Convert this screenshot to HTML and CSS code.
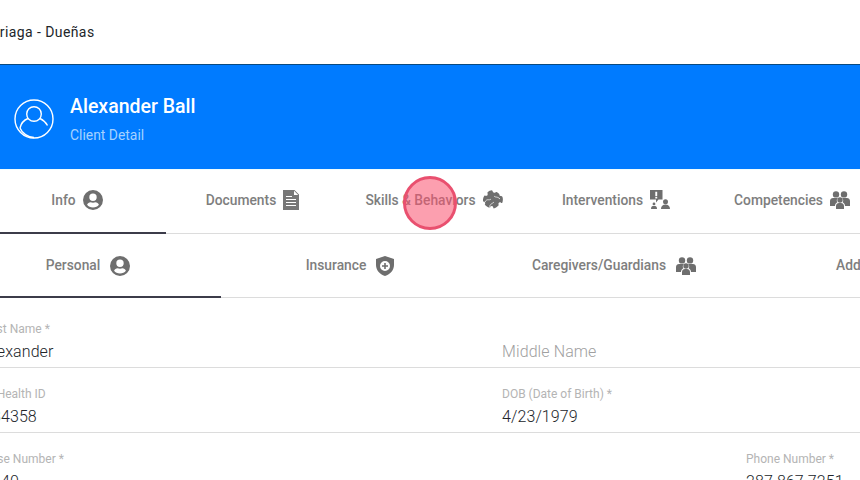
FILE: index.html
```html
<!DOCTYPE html>
<html lang="en">
<head>
<meta charset="utf-8">
<title>Client Detail</title>
<link rel="stylesheet" href="styles.css">
</head>
<body>
<svg class="defs" width="0" height="0" aria-hidden="true">
  <symbol id="i-user" viewBox="0 0 20 20"><path fill-rule="evenodd" d="M10 0a10 10 0 1 0 0 20a10 10 0 0 0 0-20zM10 3.600a3.700 3.700 0 1 1 0 7.400a3.700 3.700 0 0 1 0-7.400zM10 17.600c-2.500 0-4.600-1.100-5.900-2.800c.5-1.700 2-2.600 3.400-2.600c.8.3 1.600.5 2.500.5s1.700-.2 2.500-.5c1.400 0 2.900.9 3.400 2.600c-1.300 1.700-3.400 2.800-5.900 2.800z"/></symbol>
  <symbol id="i-doc" viewBox="0 0 16 20"><path fill-rule="evenodd" d="M0 0h11.500l4.500 4.500V20H0zM11 .8V5h4.200zM3 6v1.100h6V6zM3 9v1.100h10V9zM3 12v1.100h10V12zM3 15v1.100h10V15z"/></symbol>
  <symbol id="i-skill" viewBox="0 0 20 20"><path d="M9 .3c1 .9.600 2.200 2 2.500c1.200.2 1.500-1.100 2.700-.8c1.100.5 2 1.300 2.800 2.200c-.5 1 .2 1.500 1 1.800c1.100.2 1.500 0 2 1c.6 2 .5 4-.3 6c-1.100.4-1.700-1-2.800-.6c-1.300.5-.9 1.900-.7 2.800c-1.300 1.500-3 2.700-5 3.300c-.8-.7-.3-2-1.600-2.400c-1.400-.3-1.700 1-2.800 1.600C4 16.700 2.800 15.800 1.800 14.500c.5-1 .7-2-.3-2.600c-.6-.3-1-.2-1.500-.3c-.3-2.300.2-4.300 1.500-6c1.100 0 2 .7 2.800-.2c.8-1 .1-2 .1-2.800C5.800 1 7.400.4 9 .3z"/><path fill="none" stroke="#ddd" stroke-width="1" d="M2 12c2-4 4-1 6-3M11 6c2 2 3 0 6 3M7 18c-1-4 2-4 4-6"/></symbol>
  <symbol id="i-interv" viewBox="0 0 20 20"><path fill-rule="evenodd" d="M0 0h12.500v9.500H8.500L6 12.500V9.500H0zM5.300 1.800v4.400h1.900V1.800zM5.300 6.900v1.500h1.900V6.900z"/><circle cx="15.500" cy="11.800" r="2.500"/><path d="M11 19c0-2.800 1.800-4.400 4.500-4.400S20 16.200 20 19zM1 19c0-2 1-3.200 3-3.200S7 17 7 19zM2.600 14a1.400 1.400 0 1 1 2.800 0l-.3 1h-2.200z"/></symbol>
  <symbol id="i-group" viewBox="0 0 20 18"><circle cx="6" cy="3.400" r="3.200"/><circle cx="14" cy="3.400" r="3.200"/><circle cx="10" cy="9" r="2.700"/><path d="M0 15V10c0-2 1.500-3 3-3h5c-1.500 1-1.500 3-.7 4.300C6 12 5 13.500 5 15zM20 15V10c0-2-1.500-3-3-3h-5c1.500 1 1.500 3 .7 4.300C14 12 15 13.500 15 15zM6 18v-3c0-2 1.500-3 3-3h2c1.500 0 3 1 3 3v3z"/></symbol>
  <symbol id="i-shield" viewBox="0 0 18 20"><path fill-rule="evenodd" d="M9 0l9 3v6c0 5-3.500 9-9 11C3.500 18 0 14 0 9V3zM9 5a5 5 0 1 0 0 10a5 5 0 0 0 0-10zM8.200 7h1.600v2.200H12v1.600H9.800V13H8.200v-2.200H6V9.200h2.200z"/></symbol>
</svg>

<div class="page">
  <header class="topbar"><span class="org">Arriaga - Dueñas</span></header>

  <section class="banner">
    <svg class="avatar" viewBox="0 0 40 40" aria-hidden="true">
      <circle cx="20" cy="20" r="19"/>
      <circle cx="20" cy="15" r="7.300"/>
      <path d="M14 19.500c-4 1.500-7 5-8 9.500M26 19.500c3 1.300 5.500 3.500 7.500 7"/>
      <path d="M6 29c2 5 8 9.500 14 9.500"/>
    </svg>
    <div class="banner-text">
      <h1 class="client-name">Alexander Ball</h1>
      <p class="client-sub">Client Detail</p>
    </div>
  </section>

  <nav class="tabs tabs-main">
    <a class="tab active">Info <svg class="ico ico-user"><use href="#i-user"/></svg></a>
    <a class="tab">Documents <svg class="ico ico-doc"><use href="#i-doc"/></svg></a>
    <a class="tab">Skills &amp; Behaviors <svg class="ico ico-user"><use href="#i-skill"/></svg></a>
    <a class="tab">Interventions <svg class="ico ico-user"><use href="#i-interv"/></svg></a>
    <a class="tab">Competencies <svg class="ico ico-group"><use href="#i-group"/></svg></a>
  </nav>

  <nav class="tabs tabs-sub">
    <a class="tab active">Personal <svg class="ico ico-user gap"><use href="#i-user"/></svg></a>
    <a class="tab">Insurance <svg class="ico ico-shield gap"><use href="#i-shield"/></svg></a>
    <a class="tab">Caregivers/Guardians <svg class="ico ico-group gap"><use href="#i-group"/></svg></a>
    <a class="tab tab-left">Additional</a>
  </nav>

  <form class="form">
    <div class="row row-first row-2">
      <div class="field"><label>First Name *</label><div class="value">Alexander</div></div>
      <div class="field"><label class="hidden-label">Middle Name</label><div class="value placeholder">Middle Name</div></div>
    </div>
    <div class="row row-2">
      <div class="field"><label>RI Health ID</label><div class="value">234358</div></div>
      <div class="field"><label>DOB (Date of Birth) *</label><div class="value">4/23/1979</div></div>
    </div>
    <div class="row row-last row-3">
      <div class="field"><label>Case Number *</label><div class="value">5640</div></div>
      <div class="field"><label>Phone Number *</label><div class="value">287 867 7251</div></div>
    </div>
  </form>
</div>

<div class="click-marker"></div>
</body>
</html>
```

FILE: styles.css
```css
* { box-sizing: border-box; }
html, body { margin: 0; padding: 0; height: 100%; overflow: hidden; background: #fff; }
body { font-family: Roboto, "Liberation Sans", sans-serif; color: #212529; position: relative; }
.defs { position: absolute; }

.page { width: 860px; height: 480px; overflow: hidden; }

.topbar { height: 65px; border-bottom: 1px solid #0a4a80; display: flex; align-items: center; }
.org { font-size: 14px; letter-spacing: .42px; color: #212529; margin-left: -15px; white-space: nowrap; }

.banner { height: 104px; background: #007bff; display: flex; align-items: center; padding: 0 0 0 14px; gap: 16px; }
.avatar { width: 40px; height: 40px; fill: none; stroke: #fff; stroke-width: 1.400; flex: none; position: relative; top: 2px; }
.banner-text { display: flex; flex-direction: column; gap: 8px; position: relative; top: 1.500px; }
.client-name { margin: 0; font-size: 19.500px; line-height: 24px; font-weight: 500; color: #fff; }
.client-sub { margin: 0; font-size: 13.900px; line-height: 16px; color: #a5d2ff; }

.tabs { display: grid; border-bottom: 1px solid #dcdcdc; }
.tabs-main { height: 65px; margin-left: -12px; width: 893px; grid-template-columns: 178px 173px 190px 174px 178px; border-top: 1px solid #f0fdff; }
.tabs-sub { height: 64px; margin-left: -45px; width: 1000px; grid-template-columns: 266px 258px 270px 206px; }
.tab { display: flex; align-items: center; justify-content: center; gap: 7px; font-size: 13.800px; font-weight: 500; color: #7e7e7e; position: relative; white-space: nowrap; }
.tabs-main .tab { padding-bottom: 4px; }
.tabs-sub .tab { padding-bottom: 2px; }
.tab.active::after { content: ""; position: absolute; left: 0; right: 0; bottom: -1px; height: 2px; background: #3c3c4a; }
.tab-left { justify-content: flex-start; padding-left: 87px; }
.ico { fill: #6e6e6e; flex: none; }
.ico-user { width: 20px; height: 20px; margin-top: 1px; }
.ico-doc { width: 16px; height: 20px; fill: #777; }
.ico-group { width: 20px; height: 18px; }
.ico-shield { width: 18px; height: 20px; }
.gap { margin-left: 3px; margin-top: 3px; }

.form { margin-left: -17px; width: 877px; }
.row { height: 65px; border-bottom: 1px solid #dcdcdc; display: grid; padding-top: 18px; }
.row-first { height: 70px; padding-top: 23px; }
.row-last { border-bottom: 0; }
.row-2 { grid-template-columns: 519px 1fr; }
.row-3 { grid-template-columns: 763px 1fr; }
.field { display: flex; flex-direction: column; }
.field label { font-size: 12px; line-height: 16px; color: #b4b4b4; white-space: nowrap; }
.value { font-size: 16px; line-height: 24px; margin-top: 3px; font-weight: 300; color: #212529; letter-spacing: .1px; white-space: nowrap; }
.placeholder { color: #a0a0a0; }
.hidden-label { visibility: hidden; }

.click-marker { position: absolute; left: 403px; top: 176px; width: 54px; height: 54px; border-radius: 50%; background: rgba(250, 80, 110, .55); border: 3px solid #e9506f; }
```
